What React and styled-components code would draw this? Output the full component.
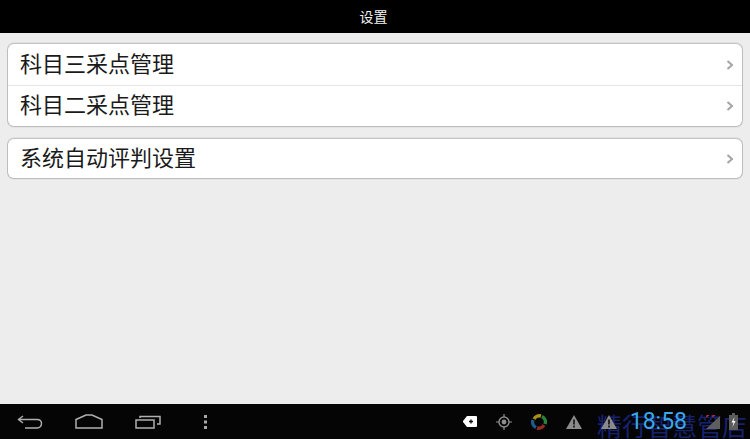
import React from 'react';
import styled, { createGlobalStyle } from 'styled-components';

const CJK = `"Noto Sans CJK SC", "Liberation Sans", sans-serif`;

const Global = createGlobalStyle`
  html, body { margin: 0; padding: 0; background: #ededed; }
  body { font-family: ${CJK}; }
`;

const Screen = styled.div`
  width: 750px;
  height: 439px;
  display: flex;
  flex-direction: column;
  overflow: hidden;
  background: #ededed;
`;

const TitleBar = styled.header`
  height: 33px;
  flex: none;
  display: flex;
  align-items: center;
  justify-content: center;
  background: #000;
  color: #f2f2f2;
  font-size: 14px;
  padding: 0 3px 2px 0;
  box-sizing: border-box;
`;

const Content = styled.main`
  flex: 1;
  padding: 10px 7px 0 7px;
  display: flex;
  flex-direction: column;
  gap: 11px;
`;

const Group = styled.section`
  background: #fff;
  border: 1px solid #bdbdbd;
  border-top-color: #c4c4c4;
  border-radius: 7px;
  box-shadow: 0 -1px 0 #e0e0e0, 0 1px 0 #e4e4e4;
`;

const Row = styled.div`
  height: ${({ $h }) => $h}px;
  display: flex;
  align-items: center;
  justify-content: space-between;
  padding: 0 8px 0 12px;
  color: #1a1a1a;
  font-size: 22px;
  & + & { border-top: 1px solid #e4e4e4; }
`;

const Label = styled.span`
  margin-top: -6px;
`;

const Chevron = () => (
  <svg width="8" height="10" viewBox="0 0 8 10">
    <path d="M1.5 1 L6 5 L1.5 9" fill="none" stroke="#a4a4a4" strokeWidth="2" />
  </svg>
);

const NavBar = styled.footer`
  height: 35px;
  flex: none;
  position: relative;
  display: flex;
  align-items: center;
  background: #050505;
  padding: 0 12px 0 17px;
`;

const SoftKeys = styled.div`
  display: flex;
  align-items: center;
  gap: 32px;
  margin-right: auto;
`;

const MenuSlot = styled.span`
  display: flex;
  margin-left: 11px;
`;

const Tray = styled.div`
  position: relative;
  z-index: 1;
  display: flex;
  align-items: center;
  gap: 19px;
`;

const Clock = styled.span`
  color: #39a9ee;
  font-family: "Roboto", "Liberation Sans", sans-serif;
  font-size: 23px;
  line-height: 28px;
  margin-left: -6px;
`;

const BatterySlot = styled.span`
  display: flex;
  margin-left: -10px;
`;

const Watermark = styled.span`
  position: absolute;
  left: 597px;
  top: 8px;
  color: #17226f;
  font-size: 25px;
  line-height: 26px;
  white-space: nowrap;
`;

const Back = () => (
  <svg width="26" height="14" viewBox="0 0 26 14" fill="none" stroke="#b0b0b0" strokeWidth="1.4">
    <path d="M6 1 L1.5 4.5 L6 8" />
    <path d="M2 4.5 H20 Q24.5 4.5 24.5 8.5 T20 13 H8" />
  </svg>
);
const Home = () => (
  <svg width="28" height="15" viewBox="0 0 28 15" fill="none" stroke="#b0b0b0" strokeWidth="1.5">
    <path d="M1 5.5 L11 1 H17 L27 5.5 V14 H1 Z" />
  </svg>
);
const Recent = () => (
  <svg width="26" height="14" viewBox="0 0 26 14" fill="none" stroke="#b0b0b0" strokeWidth="1.5">
    <path d="M1 5 H19 V13 H1 Z" />
    <path d="M5 3 V1.5 H25 V9 H22" />
  </svg>
);
const Menu = () => (
  <svg width="3" height="14" viewBox="0 0 3 14" fill="#a8a8a8">
    <rect width="3" height="3" />
    <rect y="5.5" width="3" height="3" />
    <rect y="11" width="3" height="3" />
  </svg>
);
const Tag = () => (
  <svg width="14" height="11" viewBox="0 0 14 11">
    <path d="M4 0 H13 Q14 0 14 1 V10 Q14 11 13 11 H4 L0 6 V5 Z" fill="#fff" />
    <path d="M6 5.5 H10 M8 3.5 V7.5" stroke="#111" strokeWidth="1.4" />
  </svg>
);
const Target = () => (
  <svg width="16" height="16" viewBox="0 0 16 16" fill="none" stroke="#8e8e8e">
    <circle cx="8" cy="8" r="5" strokeWidth="1.4" />
    <circle cx="8" cy="8" r="2.4" fill="#8e8e8e" stroke="none" />
    <path d="M8 0 V3 M8 13 V16 M0 8 H3 M13 8 H16" strokeWidth="1.2" />
  </svg>
);
const Pinwheel = () => (
  <svg width="16" height="16" viewBox="0 0 16 16" fill="none" strokeWidth="3.4">
    <path d="M3 5 A6 6 0 0 1 10 2" stroke="#a88f1c" />
    <path d="M11 2.5 A6 6 0 0 1 14 10" stroke="#2a8238" />
    <path d="M13 11 A6 6 0 0 1 6 14" stroke="#8f2a26" />
    <path d="M5 13.5 A6 6 0 0 1 2 6" stroke="#1f5a8c" />
  </svg>
);
const Warning = () => (
  <svg width="16" height="14" viewBox="0 0 16 14">
    <path d="M8 0 L16 14 H0 Z" fill="#8b8b8b" />
    <path d="M8 4.5 V9.5 M8 10.5 V12.5" stroke="#111" strokeWidth="1.6" />
  </svg>
);
const Signal = () => (
  <svg width="14" height="14" viewBox="0 0 14 14">
    <path d="M14 1 V14 H0 Z" fill="#5e5e5e" />
    <path d="M0 1.5 L3 0 M6 1.5 L9 0" stroke="#b02a3a" strokeWidth="1.6" />
  </svg>
);
const Battery = () => (
  <svg width="9" height="17" viewBox="0 0 9 17">
    <path d="M3 0 H6 V2 H9 V17 H0 V2 H3 Z" fill="#5c5c5c" />
    <path d="M5.5 4 L2.5 9.5 H4.5 L3.5 14 L6.5 8 H4.5 Z" fill="#fff" />
  </svg>
);

export default function App() {
  return (
    <Screen>
      <Global />
      <TitleBar>设置</TitleBar>
      <Content>
        <Group>
          <Row $h={41}><Label>科目三采点管理</Label><Chevron /></Row>
          <Row $h={40}><Label>科目二采点管理</Label><Chevron /></Row>
        </Group>
        <Group>
          <Row $h={39}><Label>系统自动评判设置</Label><Chevron /></Row>
        </Group>
      </Content>
      <NavBar>
        <SoftKeys>
          <Back />
          <Home />
          <Recent />
          <MenuSlot><Menu /></MenuSlot>
        </SoftKeys>
        <Watermark>精行智慧管店</Watermark>
        <Tray>
          <Tag />
          <Target />
          <Pinwheel />
          <Warning />
          <Warning />
          <Clock>18:58</Clock>
          <Signal />
          <BatterySlot><Battery /></BatterySlot>
        </Tray>
      </NavBar>
    </Screen>
  );
}
